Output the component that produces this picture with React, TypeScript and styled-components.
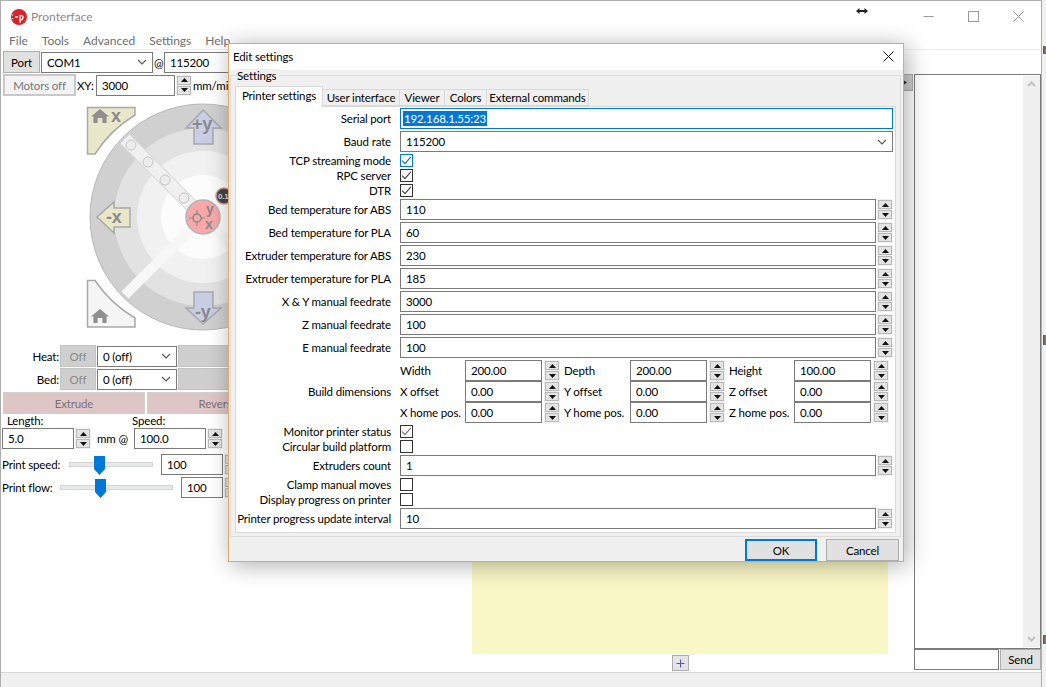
import React from 'react';
import styled, {createGlobalStyle} from 'styled-components';

const GlobalStyle = createGlobalStyle`
  html, body {
    margin: 0;
    padding: 0;
    background: #fff;
    overflow: hidden;
  }
  body {
    font-family: Lato, Roboto, sans-serif;
    font-size: 11.5px;
    letter-spacing: -0.15px;
    color: #000;
  }
  * {
    box-sizing: border-box;
  }
`;

const Desktop = styled.div`
  position: relative;
  width: 1046px;
  height: 687px;
  overflow: hidden;
  background: #f1f1f1;
`;

const MainWindow = styled.div`
  position: absolute;
  left: 0;
  top: 0;
  width: 1042px;
  height: 687px;
  display: flex;
  flex-direction: column;
  border: 1px solid #adadad;
  border-bottom: none;
  background: #fff;
`;

const ResizeCursor = styled.svg`
  position: absolute;
  left: 856px;
  top: 6px;
`;

const BehindSliver = styled.div<{$top: number; $h: number}>`
  position: absolute;
  left: 1043px;
  top: ${p => p.$top}px;
  width: 3px;
  height: ${p => p.$h}px;
  background: linear-gradient(90deg, #3a5a86, #b07a30);
`;

const TitleBar = styled.div`
  height: 31px;
  display: flex;
  align-items: center;
  gap: 3px;
  padding-left: 9px;
  font-size: 12px;
  letter-spacing: 0;
  color: #8c8c8c;
`;

const WindowButtons = styled.div`
  margin-left: auto;
  display: flex;
  align-items: center;
`;

const WindowButton = styled.div`
  width: 45px;
  height: 30px;
  display: flex;
  align-items: center;
  justify-content: center;
`;

const MenuBar = styled.div`
  height: 18px;
  display: flex;
  align-items: center;
  gap: 14px;
  padding-left: 8px;
  font-size: 12px;
  letter-spacing: 0;
  color: #6f6f6f;
  border-bottom: 1px solid #f0f0f0;
`;

const Body = styled.div`
  flex: 1;
  display: flex;
  min-height: 0;
`;

const LeftPanel = styled.div`
  width: 471px;
  padding: 1px 0 0 1px;
  display: flex;
  flex-direction: column;
  flex-shrink: 0;
`;

const Row = styled.div<{$gap?: number; $mt?: number; $ml?: number}>`
  display: flex;
  align-items: center;
  gap: ${p => p.$gap ?? 1}px;
  margin-top: ${p => p.$mt ?? 0}px;
  margin-left: ${p => p.$ml ?? 0}px;
  white-space: nowrap;
`;

const Button = styled.div<{$w: number; $h?: number; $bg?: string; $color?: string; $border?: string; $bw?: number}>`
  width: ${p => p.$w}px;
  height: ${p => p.$h ?? 22}px;
  flex-shrink: 0;
  display: flex;
  align-items: center;
  justify-content: center;
  overflow: hidden;
  background: ${p => p.$bg ?? '#e1e1e1'};
  color: ${p => p.$color ?? '#000'};
  border: ${p => p.$bw ?? 1}px solid ${p => p.$border ?? '#adadad'};
`;

const Field = styled.div<{$w?: number; $h?: number; $focus?: boolean; $ml?: number}>`
  width: ${p => (p.$w ? `${p.$w}px` : 'auto')};
  height: ${p => p.$h ?? 21}px;
  flex: ${p => (p.$w ? '0 0 auto' : '1')};
  margin-left: ${p => p.$ml ?? 0}px;
  display: flex;
  align-items: center;
  padding-left: 5px;
  background: #fff;
  border: 1px solid ${p => (p.$focus ? '#0078d7' : '#7a7a7a')};
  overflow: hidden;
  white-space: nowrap;
`;

const Selected = styled.span`
  background: #0078d7;
  color: #fff;
  margin-left: -3px;
  padding: 0 1px;
  line-height: 15px;
`;

const SelectBox = styled(Field)`
  justify-content: space-between;
  padding-right: 5px;
`;

const SpinBox = styled.div<{$ml?: number}>`
  width: 16px;
  height: 21px;
  flex-shrink: 0;
  margin-left: ${p => p.$ml ?? 0}px;
  display: flex;
  flex-direction: column;
  gap: 1px;
  background: #f0f0f0;
  padding: 1px;
`;

const SpinPart = styled.div`
  flex: 1;
  display: flex;
  align-items: center;
  justify-content: center;
  background: #e4e4e4;
  border: 1px solid #b9b9b9;
`;

const Label = styled.span<{$w?: number; $align?: string; $pl?: number}>`
  display: inline-block;
  flex-shrink: 0;
  width: ${p => (p.$w ? `${p.$w}px` : 'auto')};
  padding-left: ${p => p.$pl ?? 0}px;
  text-align: ${p => p.$align ?? 'left'};
  white-space: nowrap;
`;

const UnitLines = styled.span`
  margin-left: 5px;
  font-size: 10px;
  line-height: 10px;
`;

const JogArea = styled.div`
  height: 249px;
  padding-top: 4px;
  margin-left: 83px;
`;

const SliderTrack = styled.div<{$w: number; $thumb: number}>`
  position: relative;
  width: ${p => p.$w}px;
  height: 5px;
  flex-shrink: 0;
  background: #e7eaea;
  border: 1px solid #d6d6d6;

  &::after {
    content: '';
    position: absolute;
    left: ${p => p.$thumb}px;
    top: -7px;
    width: 11px;
    height: 19px;
    background: #0078d7;
    clip-path: polygon(0 0, 100% 0, 100% 68%, 50% 100%, 0 68%);
  }
`;

const CenterColumn = styled.div`
  width: 416px;
  flex-shrink: 0;
  display: flex;
  flex-direction: column;
  align-items: center;
`;

const GraphArea = styled.div`
  width: 100%;
  flex: 1;
  background: #f9f7c6;
`;

const PlusButton = styled.div`
  width: 17px;
  height: 16px;
  margin: 1px 0;
  display: flex;
  align-items: center;
  justify-content: center;
  background: #e4e4e4;
  border: 1px solid #adadad;
`;

const SashButton = styled.div`
  width: 13px;
  height: 17px;
  margin: 24px 0 0 12px;
  flex-shrink: 0;
  display: flex;
  align-items: center;
  justify-content: flex-start;
  padding-left: 2px;
  background: #cfcfcf;
  border: 1px solid #adadad;
`;

const LogColumn = styled.div`
  width: 127px;
  margin-left: 1px;
  padding-top: 24px;
  display: flex;
  flex-direction: column;
  flex-shrink: 0;
`;

const LogBox = styled.div`
  height: 575px;
  display: flex;
  justify-content: flex-end;
  background: #fff;
  border: 1px solid #7a7a7a;
`;

const Scrollbar = styled.div`
  width: 17px;
  margin: 1px 0;
  display: flex;
  flex-direction: column;
  justify-content: space-between;
  align-items: center;
  padding: 5px 0;
  background: #f0f0f0;
`;

const StatusBar = styled.div`
  height: 15px;
  flex-shrink: 0;
  background: #f0f0f0;
  border-top: 1px solid #d7d7d7;
`;

const Dialog = styled.div`
  position: absolute;
  left: 228px;
  top: 43px;
  width: 676px;
  height: 519px;
  display: flex;
  flex-direction: column;
  background: #f0f0f0;
  border: 1px solid #dfa868;
  box-shadow: 3px 3px 22px rgba(0, 0, 0, 0.32);
`;

const DialogTitle = styled.div`
  height: 26px;
  flex-shrink: 0;
  display: flex;
  align-items: center;
  justify-content: space-between;
  padding: 0 9px 2px 4px;
  background: #fff;
`;

const GroupBox = styled.div`
  position: relative;
  flex: 1;
  margin: 5px 2px 0 1px;
  padding: 10px 4px 0;
  border: 1px solid #dcdcdc;
`;

const GroupLabel = styled.span`
  position: absolute;
  left: 6px;
  top: -7px;
  padding-right: 3px;
  line-height: 14px;
  background: #f0f0f0;
`;

const TabStrip = styled.div`
  display: flex;
  align-items: flex-end;
  height: 20px;
`;

const Tab = styled.div<{$active?: boolean; $w: number}>`
  position: relative;
  width: ${p => p.$w}px;
  height: ${p => (p.$active ? 21 : 17)}px;
  padding-bottom: ${p => (p.$active ? 3 : 0)}px;
  margin-bottom: ${p => (p.$active ? -1 : 0)}px;
  display: flex;
  align-items: center;
  justify-content: center;
  white-space: nowrap;
  z-index: ${p => (p.$active ? 1 : 0)};
  background: ${p => (p.$active ? '#fff' : '#f0f0f0')};
  border: 1px solid #d9d9d9;
  border-left-width: ${p => (p.$active ? 1 : 0)}px;
  border-bottom-width: ${p => (p.$active ? 0 : 1)}px;
`;

const TabPage = styled.div`
  height: 427px;
  padding-right: 2px;
  display: grid;
  grid-template-columns: 155px 1fr;
  grid-auto-rows: min-content;
  column-gap: 9px;
  align-items: center;
  background: #fff;
  border: 1px solid #d9d9d9;
`;

const RowLabel = styled.span`
  text-align: right;
  white-space: nowrap;
`;

const Control = styled.div<{$h?: number}>`
  display: flex;
  align-items: center;
  gap: 1px;
  height: ${p => p.$h ?? 23}px;
`;

const CheckBox = styled.div<{$focus?: boolean}>`
  width: 13px;
  height: 13px;
  display: flex;
  align-items: center;
  justify-content: center;
  background: #fff;
  border: 1px solid ${p => (p.$focus ? '#0078d7' : '#333')};
`;

const DimGrid = styled.div`
  height: 65px;
  padding-top: 1px;
  display: grid;
  grid-template-columns: 65px 77px 22px 66px 77px 22px 65px 77px 17px;
  grid-auto-rows: 21px;
  align-items: center;
  white-space: nowrap;
`;

const DialogFooter = styled.div`
  height: 24px;
  flex-shrink: 0;
  display: flex;
  justify-content: flex-end;
  align-items: flex-start;
  gap: 9px;
  padding: 2px 4px 0 0;
`;

const ChevronDown = ({color = '#555'}: {color?: string}) => (
    <svg width="10" height="6" viewBox="0 0 10 6">
        <path d="M1 1 L5 5 L9 1" fill="none" stroke={color} strokeWidth="1.1"/>
    </svg>
);

const Spin = ({ml}: {ml?: number}) => (
    <SpinBox $ml={ml}>
        <SpinPart>
            <svg width="7" height="4" viewBox="0 0 7 4"><path d="M3.5 0 L7 4 H0 Z" fill="#111"/></svg>
        </SpinPart>
        <SpinPart>
            <svg width="7" height="4" viewBox="0 0 7 4"><path d="M0 0 H7 L3.5 4 Z" fill="#111"/></svg>
        </SpinPart>
    </SpinBox>
);

const Check = ({color = '#444'}: {color?: string}) => (
    <svg width="11" height="11" viewBox="0 0 11 11">
        <path d="M1.2 5.6 L4 8.6 L9.8 1.8" fill="none" stroke={color} strokeWidth="1.2"/>
    </svg>
);

const Home = ({x, y, fill}: {x: number; y: number; fill: string}) => (
    <path
        transform={`translate(${x} ${y}) scale(1.2 1)`}
        d="M0 7.5 L7.5 0 L15 7.5 L13 7.5 L13 14 L9.5 14 L9.5 9 L5.5 9 L5.5 14 L2 14 L2 7.5 Z"
        fill={fill}
    />
);

const wheelFont = 'Liberation Sans, sans-serif';
const wheelInk = '#8a8a8a';
const wheelEdge = '#a9a9a9';

const JogWheel = () => (
    <svg width="200" height="240" viewBox="84 100 200 240" style={{display: 'block'}}>
        <circle cx="202" cy="217" r="113" fill="#d0d0d0" stroke="#b8b8b8"/>
        <circle cx="202" cy="217" r="89" fill="#e2e2e2"/>
        <circle cx="202" cy="217" r="66" fill="#f1f1f1"/>
        <circle cx="202" cy="217" r="42" fill="#fcfcfc"/>
        <path d="M124 139 L202 217" stroke="#dadada" strokeWidth="14"/>
        <path d="M124 139 L202 217" stroke="#f0f0f0" strokeWidth="12"/>
        <path d="M124 295 L202 217 L280 295" fill="none" stroke="#f7f7f7" strokeWidth="10"/>
        {[[130, 145], [147, 162], [164, 180], [183, 198]].map(([cx, cy]) => (
            <circle key={cx} cx={cx} cy={cy} r="5" fill="#ededed" stroke="#c6c6c6"/>
        ))}

        <path d="M86.500 107.500 H134 V115 A123 123 0 0 0 94 154 H86.500 Z" fill="#e9e7ca" stroke={wheelEdge} strokeWidth="1.500"/>
        <Home x={90} y={109} fill="#8f8f8f"/>
        <text x="110" y="122" fontFamily={wheelFont} fontSize="18" fontWeight="700" fill={wheelInk}>x</text>

        <path d="M86.500 280.500 H94 A123 123 0 0 0 134 318 V327 H86.500 Z" fill="#f5f5f5" stroke={wheelEdge} strokeWidth="1.500"/>
        <Home x={90} y={309} fill="#8f8f8f"/>

        <path d="M202 110 L220 128 H212 V144 H193 V128 H185 Z" fill="#c9cde6" stroke={wheelEdge} strokeWidth="1.500"/>
        <text x="191" y="130" fontFamily={wheelFont} fontSize="18" fontWeight="700" fill={wheelInk}>+y</text>

        <path d="M193 292 H212 V308 H220 L202 324 L185 308 H193 Z" fill="#c9cde6" stroke={wheelEdge} strokeWidth="1.500"/>
        <text x="194" y="318" fontFamily={wheelFont} fontSize="18" fontWeight="700" fill={wheelInk}>-y</text>

        <path d="M96 217 L113 202 V208 H129 V227 H113 V233 Z" fill="#e9e7ca" stroke={wheelEdge} strokeWidth="1.500"/>
        <text x="105" y="223" fontFamily={wheelFont} fontSize="18" fontWeight="700" fill={wheelInk}>-x</text>

        <circle cx="223" cy="196" r="8" fill="#4a4444" stroke="#cf9a9a" strokeWidth="1.500"/>
        <text x="217" y="199" fontFamily={wheelFont} fontSize="8" fontWeight="700" fill="#ddd">0.1</text>

        <circle cx="202" cy="217" r="17" fill="#f8a8a8" stroke="#b4b4b4" strokeWidth="1.500"/>
        <circle cx="196" cy="218" r="4" fill="none" stroke={wheelInk} strokeWidth="1.500"/>
        <path d="M196 210 V214 M196 222 V226 M188 218 H192 M200 218 H204" stroke={wheelInk} strokeWidth="1.200"/>
        <text x="205" y="214" fontFamily={wheelFont} fontSize="14" fontWeight="700" fill={wheelInk}>y</text>
        <text x="204" y="229" fontFamily={wheelFont} fontSize="14" fontWeight="700" fill={wheelInk}>x</text>
    </svg>
);

const fieldRows = [
    {label: 'Bed temperature for ABS', value: '110'},
    {label: 'Bed temperature for PLA', value: '60'},
    {label: 'Extruder temperature for ABS', value: '230'},
    {label: 'Extruder temperature for PLA', value: '185'},
    {label: 'X & Y manual feedrate', value: '3000'},
    {label: 'Z manual feedrate', value: '100'},
    {label: 'E manual feedrate', value: '100'},
];

const dimRows = [
    ['Width', '200.00', 'Depth', '200.00', 'Height', '100.00'],
    ['X offset', '0.00', 'Y offset', '0.00', 'Z offset', '0.00'],
    ['X home pos.', '0.00', 'Y home pos.', '0.00', 'Z home pos.', '0.00'],
];

const NumberRow = ({label, value}: {label: string; value: string}) => (
    <>
        <RowLabel>{label}</RowLabel>
        <Control>
            <Field>{value}</Field>
            <Spin/>
        </Control>
    </>
);

const CheckRow = ({label, checked, focus, color}: {label: string; checked?: boolean; focus?: boolean; color?: string}) => (
    <>
        <RowLabel>{label}</RowLabel>
        <Control $h={15}>
            <CheckBox $focus={focus}>{checked && <Check color={color}/>}</CheckBox>
        </Control>
    </>
);

const DisabledButton = ({children}: {children: string}) => (
    <Button $w={36} $bg="#cfcfcf" $color="#8a8a8a" $border="#c4c4c4">{children}</Button>
);

export default function App() {
    return (
        <Desktop>
            <GlobalStyle/>
            <MainWindow>
                <TitleBar>
                    <svg width="18" height="18" viewBox="0 0 18 18">
                        <circle cx="9" cy="9" r="8" fill="#d8232a"/>
                        <path d="M2.500 6.500 V7.500 M2.500 10 V11 M5 9 H8 M10 7 V15 M10 8 C14 6 14 12 10 12" fill="none" stroke="#fff" strokeWidth="1.300"/>
                    </svg>
                    <span>Pronterface</span>
                    <WindowButtons>
                        <WindowButton>
                            <svg width="11" height="11" viewBox="0 0 11 11"><path d="M0.500 5.500 H10.500" stroke="#999"/></svg>
                        </WindowButton>
                        <WindowButton>
                            <svg width="11" height="11" viewBox="0 0 11 11"><rect x="0.500" y="0.500" width="10" height="10" fill="none" stroke="#999"/></svg>
                        </WindowButton>
                        <WindowButton>
                            <svg width="11" height="11" viewBox="0 0 11 11"><path d="M0.500 0.500 L10.500 10.500 M10.500 0.500 L0.500 10.500" stroke="#999"/></svg>
                        </WindowButton>
                    </WindowButtons>
                </TitleBar>
                <MenuBar>
                    <span>File</span>
                    <span>Tools</span>
                    <span>Advanced</span>
                    <span>Settings</span>
                    <span>Help</span>
                </MenuBar>
                <Body>
                    <LeftPanel>
                        <Row $ml={1}>
                            <Button $w={37}>Port</Button>
                            <SelectBox $w={112}>COM1<ChevronDown/></SelectBox>
                            <Label $w={9}>@</Label>
                            <Field $w={120}>115200</Field>
                        </Row>
                        <Row $mt={1} $ml={1}>
                            <Button $w={73} $bg="#f3f3f3" $color="#777" $border="#c9c9c9" $bw={2}>Motors off</Button>
                            <Label $w={18}>XY:</Label>
                            <Field $w={79}>3000</Field>
                            <Spin/>
                            <span>mm/min</span>
                        </Row>
                        <JogArea><JogWheel/></JogArea>
                        <Row>
                            <Label $w={57} $align="right">Heat:</Label>
                            <DisabledButton>Off</DisabledButton>
                            <SelectBox $w={80}>0 (off)<ChevronDown/></SelectBox>
                            <Button $w={120} $bg="#cfcfcf" $color="#8a8a8a" $border="#c4c4c4">Set</Button>
                        </Row>
                        <Row $mt={1}>
                            <Label $w={57} $align="right">Bed:</Label>
                            <DisabledButton>Off</DisabledButton>
                            <SelectBox $w={80}>0 (off)<ChevronDown/></SelectBox>
                            <Button $w={120} $bg="#cfcfcf" $color="#8a8a8a" $border="#c4c4c4">Set</Button>
                        </Row>
                        <Row $gap={2} $mt={2} $ml={1}>
                            <Button $w={142} $bg="#dfc6c6" $color="#7d7272" $border="#cfcfcf">Extrude</Button>
                            <Button $w={142} $bg="#dfc6c6" $color="#7d7272" $border="#cfcfcf">Reverse</Button>
                        </Row>
                        <Row $gap={0}>
                            <Label $w={130} $pl={5}>Length:</Label>
                            <Label>Speed:</Label>
                        </Row>
                        <Row $mt={1}>
                            <Field $w={72}>5.0</Field>
                            <Spin/>
                            <Label $w={41} $align="center">mm @</Label>
                            <Field $w={72}>100.0</Field>
                            <Spin/>
                            <UnitLines>mm/<br/>min</UnitLines>
                        </Row>
                        <Row $mt={5} $gap={0}>
                            <Label $w={67}>Print speed:</Label>
                            <SliderTrack $w={84} $thumb={24}/>
                            <Field $w={62} $ml={8}>100</Field>
                            <Spin ml={1}/>
                        </Row>
                        <Row $mt={2} $gap={0}>
                            <Label $w={58}>Print flow:</Label>
                            <SliderTrack $w={113} $thumb={34}/>
                            <Field $w={42} $ml={8}>100</Field>
                            <Spin ml={1}/>
                        </Row>
                    </LeftPanel>
                    <CenterColumn>
                        <GraphArea/>
                        <PlusButton>
                            <svg width="9" height="9" viewBox="0 0 9 9"><path d="M4.500 0.500 V8.500 M0.500 4.500 H8.500" stroke="#5a50c8"/></svg>
                        </PlusButton>
                    </CenterColumn>
                    <SashButton>
                        <svg width="4" height="5" viewBox="0 0 4 5"><path d="M0 0 L4 2.500 L0 5 Z" fill="#223"/></svg>
                    </SashButton>
                    <LogColumn>
                        <LogBox>
                            <Scrollbar>
                                <svg width="9" height="6" viewBox="0 0 9 6"><path d="M1 5 L4.500 1.500 L8 5" fill="none" stroke="#c2c2c2" strokeWidth="2"/></svg>
                                <svg width="9" height="6" viewBox="0 0 9 6"><path d="M1 1 L4.500 4.500 L8 1" fill="none" stroke="#c2c2c2" strokeWidth="2"/></svg>
                            </Scrollbar>
                        </LogBox>
                        <Row>
                            <Field $w={85}/>
                            <Button $w={41} $h={21}>Send</Button>
                        </Row>
                    </LogColumn>
                </Body>
                <StatusBar/>
            </MainWindow>
            <BehindSliver $top={46} $h={8}/>
            <BehindSliver $top={335} $h={10}/>
            <BehindSliver $top={635} $h={9}/>
            <ResizeCursor width="12" height="10" viewBox="0 0 12 10">
                <path d="M0 5 L3.500 2 V4 H8.500 V2 L12 5 L8.500 8 V6 H3.500 V8 Z" fill="#222"/>
            </ResizeCursor>
            <Dialog>
                <DialogTitle>
                    <span>Edit settings</span>
                    <svg width="11" height="11" viewBox="0 0 11 11"><path d="M0.500 0.500 L10.500 10.500 M10.500 0.500 L0.500 10.500" stroke="#111"/></svg>
                </DialogTitle>
                <GroupBox>
                    <GroupLabel>Settings</GroupLabel>
                    <TabStrip>
                        <Tab $active $w={88}>Printer settings</Tab>
                        <Tab $w={77}>User interface</Tab>
                        <Tab $w={45}>Viewer</Tab>
                        <Tab $w={42}>Colors</Tab>
                        <Tab $w={102}>External commands</Tab>
                    </TabStrip>
                    <TabPage>
                        <RowLabel>Serial port</RowLabel>
                        <Control><Field $focus><Selected>192.168.1.55:23</Selected></Field></Control>
                        <RowLabel>Baud rate</RowLabel>
                        <Control><SelectBox>115200<ChevronDown/></SelectBox></Control>
                        <CheckRow label="TCP streaming mode" checked focus color="#0078d7"/>
                        <CheckRow label="RPC server" checked/>
                        <CheckRow label="DTR" checked/>
                        {fieldRows.map(row => <NumberRow key={row.label} {...row}/>)}
                        <RowLabel>Build dimensions</RowLabel>
                        <DimGrid>
                            {dimRows.map(row => row.map((cell, i) => (
                                <React.Fragment key={row[0] + i}>
                                    {i % 2 === 0 ? <span>{cell}</span> : <Field $w={77}>{cell}</Field>}
                                    {i % 2 === 1 && <Spin ml={2}/>}
                                </React.Fragment>
                            )))}
                        </DimGrid>
                        <CheckRow label="Monitor printer status" checked color="#777"/>
                        <CheckRow label="Circular build platform"/>
                        <NumberRow label="Extruders count" value="1"/>
                        <CheckRow label="Clamp manual moves"/>
                        <CheckRow label="Display progress on printer"/>
                        <NumberRow label="Printer progress update interval" value="10"/>
                    </TabPage>
                </GroupBox>
                <DialogFooter>
                    <Button $w={72} $border="#0078d7" $bw={2}>OK</Button>
                    <Button $w={73}>Cancel</Button>
                </DialogFooter>
            </Dialog>
        </Desktop>
    );
}
